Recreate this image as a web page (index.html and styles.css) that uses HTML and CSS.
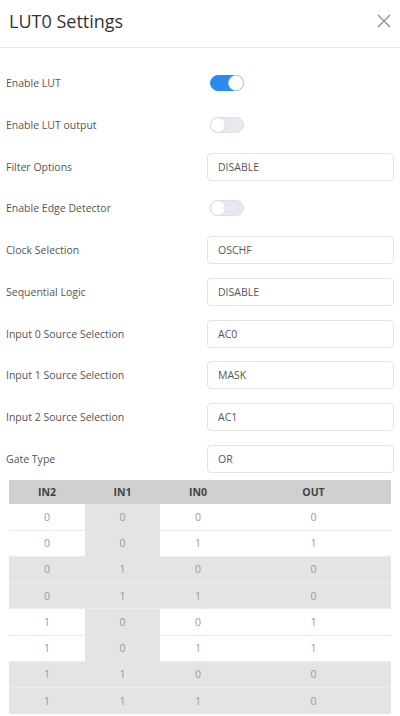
FILE: index.html
```html
<!DOCTYPE html>
<html>
<head>
<meta charset="utf-8">
<link rel="stylesheet" href="styles.css">
</head>
<body>
<div class="dialog">
  <div class="header">
    <h1 class="title">LUT0 Settings</h1>
    <svg class="close" width="14" height="14" viewBox="0 0 14 14"><path d="M1 1L13 13M13 1L1 13" stroke="#8a8a8a" stroke-width="1.3" fill="none"/></svg>
  </div>
  <div class="form">
    <div class="row"><span class="label">Enable LUT</span><span class="toggle on"><span class="thumb"></span></span></div>
    <div class="row"><span class="label">Enable LUT output</span><span class="toggle"><span class="thumb"></span></span></div>
    <div class="row"><span class="label">Filter Options</span><span class="field">DISABLE</span></div>
    <div class="row"><span class="label">Enable Edge Detector</span><span class="toggle"><span class="thumb"></span></span></div>
    <div class="row"><span class="label">Clock Selection</span><span class="field">OSCHF</span></div>
    <div class="row"><span class="label">Sequential Logic</span><span class="field">DISABLE</span></div>
    <div class="row"><span class="label">Input 0 Source Selection</span><span class="field">AC0</span></div>
    <div class="row"><span class="label">Input 1 Source Selection</span><span class="field">MASK</span></div>
    <div class="row"><span class="label">Input 2 Source Selection</span><span class="field">AC1</span></div>
    <div class="row"><span class="label">Gate Type</span><span class="field">OR</span></div>
  </div>
  <table class="truth">
    <thead>
      <tr><th class="c1">IN2</th><th class="c2">IN1</th><th class="c3">IN0</th><th class="c4">OUT</th></tr>
    </thead>
    <tbody>
      <tr><td>0</td><td class="hl">0</td><td>0</td><td>0</td></tr>
      <tr><td>0</td><td class="hl">0</td><td>1</td><td>1</td></tr>
      <tr class="grey"><td>0</td><td>1</td><td>0</td><td>0</td></tr>
      <tr class="grey"><td>0</td><td>1</td><td>1</td><td>0</td></tr>
      <tr><td>1</td><td class="hl">0</td><td>0</td><td>1</td></tr>
      <tr><td>1</td><td class="hl">0</td><td>1</td><td>1</td></tr>
      <tr class="grey"><td>1</td><td>1</td><td>0</td><td>0</td></tr>
      <tr class="grey last"><td>1</td><td>1</td><td>1</td><td>0</td></tr>
    </tbody>
  </table>
</div>
</body>
</html>
```
FILE: styles.css
```css
html, body {
  margin: 0;
  padding: 0;
  background: #ffffff;
}
body {
  font-family: "Open Sans", "Noto Sans", sans-serif;
  color: #555;
}
.dialog {
  width: 400px;
  height: 716px;
  overflow: hidden;
}
.header {
  border-bottom: 1px solid #e9e9e9;
  display: flex;
  align-items: center;
  justify-content: space-between;
  padding: 0 8px 0 9px;
  box-sizing: border-box;
  height: 48px;
}
.title {
  margin: 0;
  font-size: 18px;
  font-weight: 400;
  color: #333;
  padding-bottom: 5px;
}
.close {
  margin-right: 1px;
  margin-bottom: 6px;
}
.form {
  padding: 21px 6px 0 6px;
  display: flex;
  flex-direction: column;
  gap: 13.75px;
}
.row {
  height: 28px;
  display: flex;
  align-items: center;
}
.label {
  width: 201px;
  font-size: 10.5px;
  color: #555;
}
.field {
  flex: 1;
  height: 28px;
  box-sizing: border-box;
  border: 1px solid #e3e3e3;
  border-radius: 4px;
  display: flex;
  align-items: center;
  padding-left: 10px;
  font-size: 10.5px;
  color: #555;
}
.toggle {
  margin-left: 3px;
  width: 34px;
  height: 16px;
  box-sizing: border-box;
  border-radius: 8px;
  background: #e6e9ed;
  border: 1px solid #dcdfe3;
  position: relative;
}
.toggle .thumb {
  position: absolute;
  left: -1px;
  top: -1px;
  width: 16px;
  height: 16px;
  box-sizing: border-box;
  border-radius: 50%;
  background: #fff;
  border: 1px solid #d6d9dd;
}
.toggle.on {
  background: #2b8cf0;
  border-color: #2b8cf0;
}
.toggle.on .thumb {
  left: auto;
  right: -1px;
  border-color: #b8d4f3;
}
.truth {
  margin: 7px 0 0 9px;
  width: 382px;
  border-collapse: collapse;
  table-layout: fixed;
  font-size: 10.5px;
}
.truth th {
  background: #d0d0d0;
  color: #444;
  font-weight: 700;
  height: 24px;
  padding: 0;
  text-align: center;
}
.c1 { width: 76px; }
.c2 { width: 75px; }
.c3 { width: 76px; }
.c4 { width: 155px; }
.truth td {
  height: 26.25px;
  padding: 0;
  box-sizing: border-box;
  text-align: center;
  color: #999;
  border-bottom: 1px solid #ebebeb;
}
.truth td.hl {
  background: #e4e4e4;
  border-bottom-color: #e4e4e4;
}
.truth tr.grey td {
  background: #e4e4e4;
  border-bottom-color: #ececec;
}
.truth tr.last td {
  border-bottom: none;
}
```
